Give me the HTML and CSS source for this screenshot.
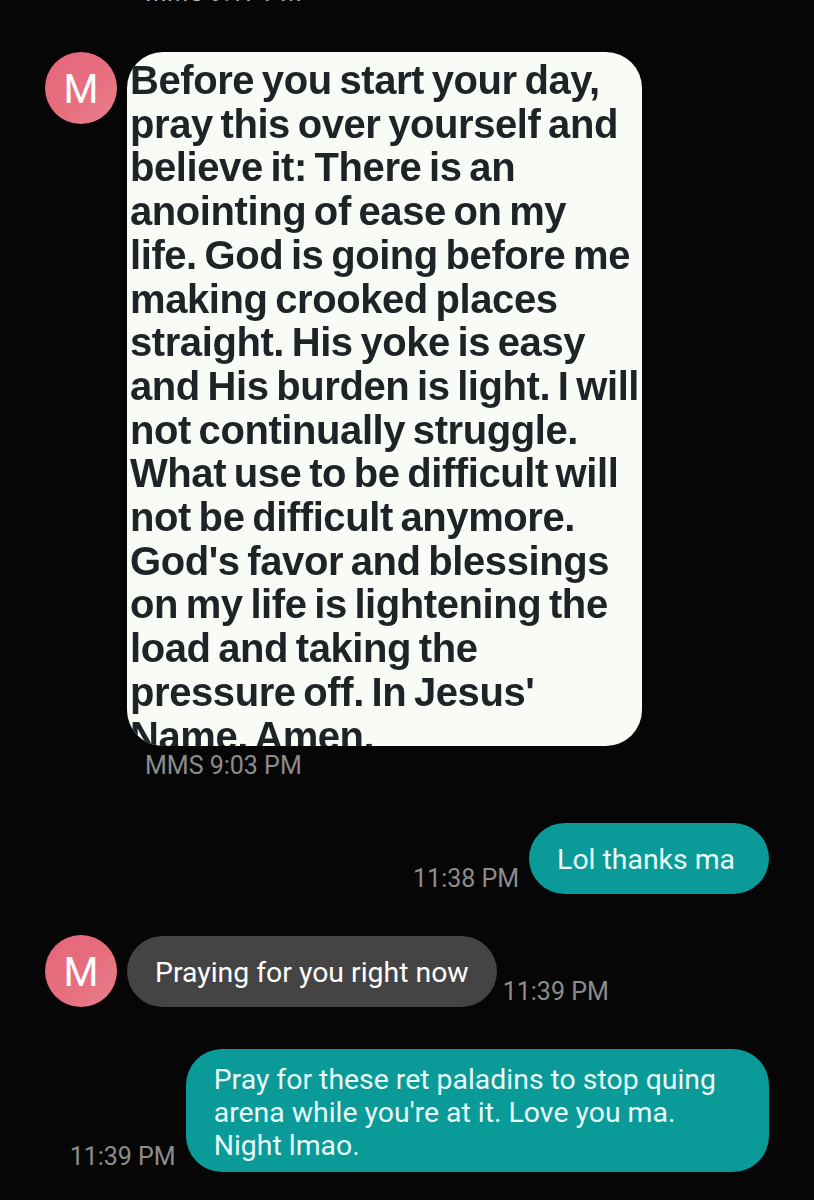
FILE: index.html
```html
<!DOCTYPE html>
<html lang="en">
<head>
  <meta charset="UTF-8" />
  <title>Messages</title>
  <meta name="viewport" content="width=device-width, initial-scale=1.0" />
  <link rel="stylesheet" href="styles.css">
</head>
<body>

  <div class="thread">
    <div class="meta meta-clipped">MMS 9:17 PM</div>

    <div class="row row-image">
      <div class="avatar">M</div>
      <div class="photo">
        <div class="photo-text">
          <div>Before you start your day,</div>
          <div>pray this over yourself and</div>
          <div>believe it: There is an</div>
          <div>anointing of ease on my</div>
          <div>life. God is going before me</div>
          <div>making crooked places</div>
          <div>straight. His yoke is easy</div>
          <div>and His burden is light. I will</div>
          <div>not continually struggle.</div>
          <div>What use to be difficult will</div>
          <div>not be difficult anymore.</div>
          <div>God's favor and blessings</div>
          <div>on my life is lightening the</div>
          <div>load and taking the</div>
          <div>pressure off. In Jesus'</div>
          <div>Name. Amen.</div>
        </div>
      </div>
    </div>
    <div class="meta meta-image">MMS 9:03 PM</div>

    <div class="row row-sent row-thanks">
      <span class="time">11:38 PM</span>
      <div class="bubble sent">Lol thanks ma</div>
    </div>

    <div class="row row-received">
      <div class="avatar">M</div>
      <div class="bubble received">Praying for you right now</div>
      <span class="time">11:39 PM</span>
    </div>

    <div class="row row-sent row-long">
      <span class="time">11:39 PM</span>
      <div class="bubble sent long">Pray for these ret paladins to stop quing<br>arena while you're at it. Love you ma.<br>Night lmao.</div>
    </div>
  </div>

</body>
</html>
```

FILE: styles.css
```css
body {
  margin: 0;
  background: #060606;
  font-family: Roboto, sans-serif;
  color: #fff;
}

.thread {
  height: 1200px;
  overflow: hidden;
  padding: 0 45px;
  box-sizing: border-box;
}

.meta {
  font-size: 25px;
  line-height: 28px;
  color: #8c8c8c;
}

.meta-clipped {
  margin: -21px 0 0 100px;
  color: #b0b0b0;
}

.meta-image {
  margin: 6px 0 0 100px;
}

.row {
  display: flex;
  align-items: flex-end;
}

.row-image {
  align-items: flex-start;
  margin-top: 45px;
  gap: 10px;
}

.avatar {
  width: 72px;
  height: 72px;
  flex: none;
  border-radius: 50%;
  background: linear-gradient(135deg, #e4667a 0%, #e76f7e 55%, #e9818f 100%);
  font-size: 40px;
  line-height: 76px;
  text-align: center;
}

.photo {
  width: 515px;
  height: 694px;
  border-radius: 36px;
  overflow: hidden;
  background: #f9fbf6;
}

.photo-text {
  padding: 7px 0 0 3px;
  font-family: "Liberation Sans", Arial, sans-serif;
  font-weight: 700;
  font-size: 40px;
  line-height: 43.7px;
  letter-spacing: -0.42px;
  word-spacing: -3px;
  white-space: nowrap;
  color: #1d2326;
  filter: blur(0.5px);
}

.bubble {
  font-size: 28.4px;
  line-height: 33px;
  padding: 20px 28px 18px;
  border-radius: 36px;
}

.sent {
  background: #0a9a98;
  color: #e8fbfa;
  padding-right: 34px;
}

.received {
  background: #444444;
  margin-left: 10px;
}

.time {
  font-size: 25px;
  line-height: 28px;
  color: #8c8c8c;
}

.row-sent {
  justify-content: flex-end;
  gap: 10px;
}

.row-thanks {
  margin-top: 43px;
}

.row-received {
  margin-top: 41px;
}

.row-received .time {
  margin: 0 0 1px 6px;
}

.row-long {
  margin-top: 42px;
}

.row-long .time {
  margin-bottom: 1px;
}

.row-thanks .time {
  margin-bottom: 1px;
}

.long {
  padding: 14px 53px 10px 28px;
}
```
